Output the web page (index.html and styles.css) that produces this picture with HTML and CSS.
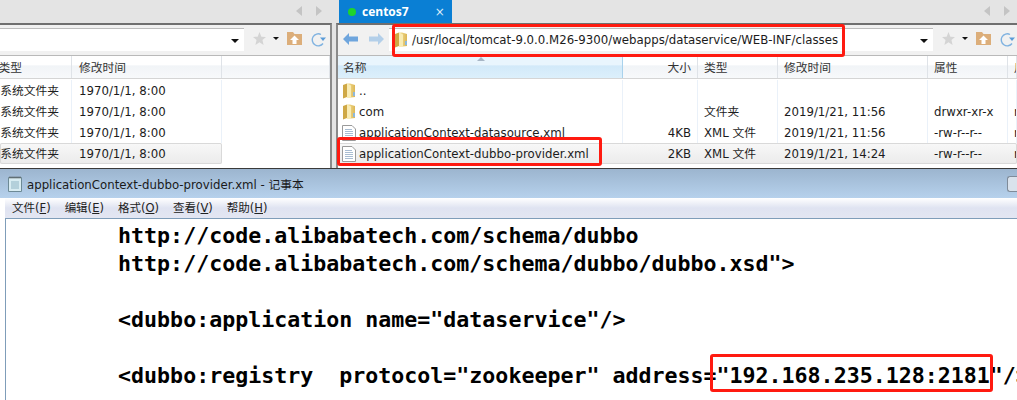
FILE: index.html
```html
<!DOCTYPE html>
<html lang="zh">
<head>
<meta charset="utf-8">
<title>applicationContext-dubbo-provider.xml - 记事本</title>
<link rel="stylesheet" href="styles.css">
</head>
<body>
<svg class="defs" width="0" height="0" aria-hidden="true">
  <defs>
    <linearGradient id="fold" x1="0" y1="0" x2="1" y2="0"><stop offset="0" stop-color="#f6e49c"/><stop offset="1" stop-color="#dcb655"/></linearGradient>
    <symbol id="folder" viewBox="0 0 14 16">
      <path d="M1 2 L5 0.500 L5 14 L1 15.500 Z" fill="#cfa845"/>
      <path d="M5 .5 H8 L13 2 V14 L5 15 Z" fill="url(#fold)"/>
      <path d="M5 .5 L9 2.500 V15 L5 15 Z" fill="#f9ecb4"/>
      <path d="M11 9 h2 v4 h-2z" fill="#8db8da"/>
    </symbol>
    <symbol id="doc" viewBox="0 0 14 16">
      <path d="M.5.5 H10 L13.500 4 V15.500 H.5 Z" fill="#fff" stroke="#9a9a9a"/>
      <path d="M3 4.500h7M3 6.500h8M3 8.500h8M3 10.500h8M3 12.500h8" stroke="#a9bdd2"/>
    </symbol>
    <symbol id="star" viewBox="0 0 14 14">
      <path d="M7 0 L9 5 L14 5.300 L10.200 8.500 L11.400 14 L7 11 L2.600 14 L3.800 8.500 L0 5.300 L5 5 Z" fill="#d4d4d4"/>
    </symbol>
    <symbol id="up" viewBox="0 0 15 13">
      <path d="M0 0 H6 L7.500 2 H15 V13 H0 Z" fill="#dcae7a"/>
      <path d="M7.500 3.500 L12 8 H9.500 V12 H5.500 V8 H3 Z" fill="#fff"/>
    </symbol>
    <symbol id="refresh" viewBox="0 0 16 15">
      <path d="M13 11.500 A6 6 0 1 1 11 2.500" fill="none" stroke="#7fb2e0" stroke-width="1.400"/>
      <path d="M10 5.500 H16 L13 9 Z" fill="#5a9cd8"/>
    </symbol>
    <symbol id="arrow" viewBox="0 0 15 12">
      <path d="M0 6 L6 0 V3.500 H15 V8.500 H6 V12 Z"/>
    </symbol>
  </defs>
</svg>

<div class="top">
  <div class="tabbar">
    <div class="tabside left-side">
      <span class="nav-tri tri-l"></span><span class="nav-tri tri-r"></span>
    </div>
    <div class="tabside right-side">
      <div class="tab"><span class="dot"></span><b class="tab-name">centos7</b><span class="tab-x">×</span></div>
      <div class="spacer"></div>
      <span class="nav-tri tri-l"></span><span class="nav-tri tri-r"></span>
    </div>
  </div>
  <div class="panes">
    <section class="pane pane-left">
      <div class="toolbar">
        <div class="combo"><span class="drop"></span></div>
        <svg class="i-star"><use href="#star"/></svg><span class="drop small"></span>
        <svg class="i-up"><use href="#up"/></svg>
        <svg class="i-refresh"><use href="#refresh"/></svg>
      </div>
      <div class="lhead">
        <div class="hcell clip">类型</div><div class="hcell time">修改时间</div><div class="hcell"></div>
      </div>
      <div class="lrow"><div class="lt">系统文件夹</div><div class="lm">1970/1/1, 8:00</div></div>
      <div class="lrow"><div class="lt">系统文件夹</div><div class="lm">1970/1/1, 8:00</div></div>
      <div class="lrow"><div class="lt">系统文件夹</div><div class="lm">1970/1/1, 8:00</div></div>
      <div class="lrow sel"><div class="lt">系统文件夹</div><div class="lm">1970/1/1, 8:00</div></div>
    </section>
    <section class="pane pane-right">
      <div class="toolbar">
        <svg class="i-back"><use href="#arrow"/></svg>
        <svg class="i-fwd"><use href="#arrow"/></svg>
        <div class="combo addr">
          <svg class="i-folder-addr"><use href="#folder"/></svg>
          <span class="path">/usr/local/tomcat-9.0.0.M26-9300/webapps/dataservice/WEB-INF/classes</span>
          <span class="drop"></span>
        </div>
        <svg class="i-star"><use href="#star"/></svg><span class="drop small"></span>
        <svg class="i-up"><use href="#up"/></svg>
        <svg class="i-refresh"><use href="#refresh"/></svg>
      </div>
      <div class="rhead">
        <div class="hcell name">名称<span class="sort"></span></div>
        <div class="hcell size">大小</div>
        <div class="hcell">类型</div>
        <div class="hcell">修改时间</div>
        <div class="hcell">属性</div>
        <div class="hcell">用户</div>
      </div>
      <div class="rrow">
        <div class="n"><svg class="i-file"><use href="#folder"/></svg>..</div><div class="s"></div><div></div><div></div><div></div><div></div>
      </div>
      <div class="rrow">
        <div class="n"><svg class="i-file"><use href="#folder"/></svg>com</div><div class="s"></div><div>文件夹</div><div>2019/1/21, 11:56</div><div>drwxr-xr-x</div><div>root</div>
      </div>
      <div class="rrow">
        <div class="n"><svg class="i-file"><use href="#doc"/></svg>applicationContext-datasource.xml</div><div class="s">4KB</div><div>XML 文件</div><div>2019/1/21, 11:56</div><div>-rw-r--r--</div><div>root</div>
      </div>
      <div class="rrow sel">
        <div class="n"><svg class="i-file"><use href="#doc"/></svg>applicationContext-dubbo-provider.xml</div><div class="s">2KB</div><div>XML 文件</div><div>2019/1/21, 14:24</div><div>-rw-r--r--</div><div>root</div>
      </div>
    </section>
  </div>
</div>

<div class="notepad">
  <div class="titlebar">
    <svg class="i-note" viewBox="0 0 14 16"><path d="M.5 1.500 H13.500 V15.500 H.5Z" fill="#d8ecf2" stroke="#6d8a96"/><path d="M2 .5v2M4 .5v2M6 .5v2M8 .5v2M10 .5v2M12 .5v2" stroke="#555"/><path d="M3 6h8M3 8h8M3 10h8M3 12h8" stroke="#8fb4c4"/></svg>
    <span class="title-text">applicationContext-dubbo-provider.xml - 记事本</span>
    <span class="spacer"></span>
    <span class="min-btn"></span>
  </div>
  <div class="menubar">
    <span>文件(<u>F</u>)</span><span>编辑(<u>E</u>)</span><span>格式(<u>O</u>)</span><span>查看(<u>V</u>)</span><span>帮助(<u>H</u>)</span>
  </div>
  <pre class="code">        http://code.alibabatech.com/schema/dubbo
        http://code.alibabatech.com/schema/dubbo/dubbo.xsd"&gt;

        &lt;dubbo:application name="dataservice"/&gt;

        &lt;dubbo:registry  protocol="zookeeper" address="192.168.235.128:2181"/&gt;</pre>
</div>

<div class="mark mark-addr"></div>
<div class="mark mark-file"></div>
<div class="mark mark-ip"></div>
</body>
</html>
```
FILE: styles.css
```css
* { box-sizing: border-box; }
html, body { margin: 0; height: 400px; overflow: hidden; }
body {
  position: relative;
  width: 1017px;
  background: #fff;
  font: 11.75px/16px "DejaVu Sans", "Noto Sans CJK SC", sans-serif;
  color: #1c1c1c;
  display: flex;
  flex-direction: column;
}
.defs { position: absolute; }
.spacer { flex: 1; }

.top { height: 168px; background: #e4e4e4; flex: none; }
.tabbar { height: 23px; display: flex; }
.tabside { display: flex; align-items: center; }
.left-side { width: 339px; justify-content: flex-end; padding-right: 17px; gap: 14px; }
.right-side { flex: 1; padding-right: 7px; }
.nav-tri { width: 0; height: 0; border-style: solid; border-color: transparent; border-width: 5px 0; margin-top: -2px; }
.tri-l { border-right: 6px solid #c4c4c4; }
.tri-r { border-left: 6px solid #c4c4c4; margin-left: 14px; }
.left-side .tri-r { margin-left: 0; }
.tab {
  width: 113px; height: 23px; background: #0a7fd4; color: #fff;
  display: flex; align-items: center; padding-left: 9px;
}
.dot { width: 8px; height: 8px; border-radius: 50%; background: #1fd32d; }
.tab-name { margin-left: 6px; font: bold 12px/16px "Open Sans", sans-serif; }
.tab-x { margin-left: 26px; font: 12px/16px "DejaVu Sans", sans-serif; color: #dcecf8; }

.panes { display: flex; height: 145px; gap: 4px; }
.pane { background: #fff; border-top: 2px solid #6f6f6f; overflow: hidden; }
.pane-left { width: 332px; border-right: 2px solid #8a8a8a; }
.pane-right { flex: 1; border-left: 2px solid #8a8a8a; }

.toolbar {
  height: 31px; background: #f1f1f1; display: flex; align-items: center;
  border-bottom: 1px solid #b9b9b9; position: relative;
}
.combo {
  width: 244px; height: 23px; background: #fff; border-top: 1px solid #bdbdbd;
  display: flex; align-items: center; justify-content: flex-end; padding-right: 5px; margin-top: -2px;
  flex: none;
}
.combo.addr { width: 544px; margin-left: 5px; justify-content: flex-start; padding: 0 5px 0 5px; }
.path { margin-left: 4px; flex: 1; white-space: nowrap; }
.drop { width: 0; height: 0; border-style: solid; border-color: #111 transparent transparent; border-width: 4px 4px 0; margin-top: 2px; flex: none; }
.drop.small { border-width: 3px 3px 0; margin: -3px 0 0 7px; }
.i-star { width: 13px; height: 13px; margin: -3px 0 0 9px; flex: none; }
.i-up { width: 15px; height: 13px; margin: -3px 0 0 8px; flex: none; }
.i-refresh { width: 16px; height: 15px; margin: -2px 0 0 8px; flex: none; }
.i-back { width: 15px; height: 12px; margin: -2px 0 0 5px; fill: #6ea5dd; flex: none; }
.i-fwd { width: 15px; height: 12px; margin: -2px 0 0 11px; fill: #b3cfe9; transform: scaleX(-1); flex: none; }
.i-folder-addr { width: 14px; height: 16px; flex: none; }
.i-file { width: 14px; height: 16px; flex: none; margin-right: 3px; }

.lhead, .lrow { display: grid; grid-template-columns: 72px 150px; }
.lrow { width: 222px; }
.lhead { height: 23px; grid-template-columns: 72px 150px 1fr; }
.rhead, .rrow { display: grid; grid-template-columns: 285px 75px 80px 150px 80px 1fr; }
.rhead { height: 23px; }
.lhead, .rhead {
  background: linear-gradient(#fff 0 40%, #f1f4f7 45%, #f7f9fb);
  border-bottom: 1px solid #d5d5d5;
}
.hcell { display: flex; align-items: center; padding: 1px 0 0 6px; border-right: 1px solid #dfe3e8; color: #333; white-space: nowrap; overflow: hidden; }
.lhead .time, .lm { padding-left: 7px !important; }
.hcell.clip { justify-content: flex-end; padding: 1px 49px 0 0; }
.hcell.name {
  background: linear-gradient(#e9f5fd 0 40%, #d2e9f9 45%, #dceffb);
  border-right: 1px solid #a9d2ec; position: relative; padding-left: 5px;
}
.sort { position: absolute; left: 139px; top: 1px; width: 0; height: 0; border: solid transparent; border-width: 0 4px 4px; border-bottom-color: #a7b6c6; }
.hcell.size { justify-content: flex-end; padding-right: 6px; }

.lrow, .rrow { height: 21px; align-items: stretch; white-space: nowrap; }
.lrow > div, .rrow > div { display: flex; align-items: center; padding-left: 6px; border-right: 1px solid #eaf1f9; overflow: hidden; }
.lrow > .lt { justify-content: flex-end; padding: 0 12px 0 0; }
.rrow > .n { padding-left: 4px; }
.rrow > .s { justify-content: flex-end; padding-right: 6px; }
.lhead + .lrow, .rhead + .rrow { margin-top: 1px; }
.sel { background: linear-gradient(#f8f8f8, #ebebeb); box-shadow: inset 0 0 0 1px #d9d9d9; border-radius: 2px; }
.sel > div { border-right-color: transparent !important; }

.notepad { flex: 1; display: flex; flex-direction: column; border-top: 1px solid #3a3a3a; min-height: 0; }
.titlebar {
  height: 29px; background: linear-gradient(#9cb5cf, #b6d1ec);
  display: flex; align-items: center; padding: 3px 0 0 8px; flex: none;
}
.i-note { width: 14px; height: 16px; flex: none; margin-top: -2px; }
.title-text { margin-left: 5px; color: #1a1a1a; white-space: nowrap; }
.min-btn { width: 10px; height: 16px; margin: -3px 0 0; border: 1px solid #7f8b99; border-right: 0; border-radius: 3px 0 0 3px; background: #d9e2ec; }
.menubar {
  margin-left: 5px; height: 21px; flex: none;
  background: linear-gradient(#fff, #dfe3f1 50%, #e3e6f2);
  border-bottom: 1px solid #7f9db9;
  display: flex; align-items: center; gap: 14px; padding: 0 0 0 7px; font-size: 11.5px; color: #222;
}
.code {
  margin: 0 0 0 5px; padding: 3px 0 0 8px; flex: 1;
  border-left: 1px solid #7f9db9;
  font: bold 21.62px/28px "DejaVu Sans Mono", monospace; color: #000;
  white-space: pre; overflow: hidden;
}

.mark { position: absolute; border: 3px solid #ff1a10; border-radius: 3px; pointer-events: none; }
.mark-addr { left: 392px; top: 24px; width: 453px; height: 33px; }
.mark-file { left: 337px; top: 137px; width: 265px; height: 29px; }
.mark-ip { left: 710px; top: 354px; width: 283px; height: 38px; }
```
